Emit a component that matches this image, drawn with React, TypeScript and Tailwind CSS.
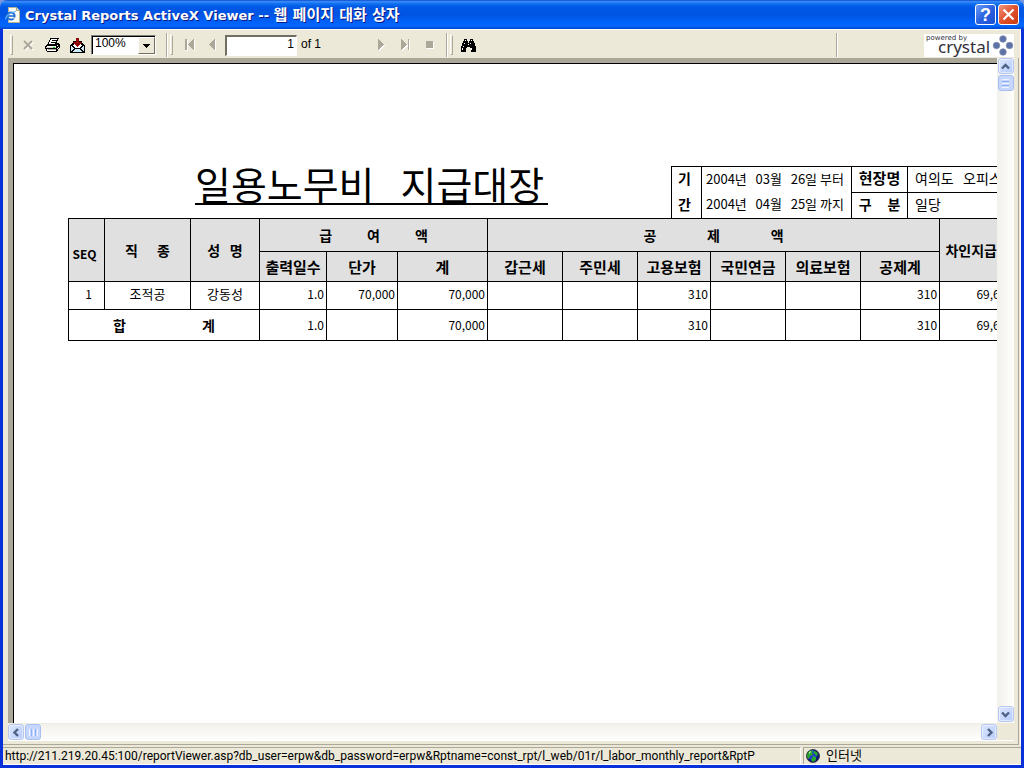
import type { ReactNode } from "react";

const ui = "font-['Liberation_Sans','Noto_Sans_CJK_KR',sans-serif]";
const report = "font-['Noto_Sans_CJK_KR',sans-serif]";

function Grip() {
  return <div className="h-5 w-[3px] border-y border-l border-r border-l-white border-t-white border-r-[#aca899] border-b-[#aca899]" />;
}

function Divider() {
  return <div className="h-6 w-[2px] border-l border-r border-l-[#aca899] border-r-white" />;
}

function ToolButton({ label, className, children }: { label: string; className: string; children: ReactNode }) {
  return (
    <button type="button" aria-label={label} className={"flex h-5 items-center justify-center " + className}>
      {children}
    </button>
  );
}

function DisabledIcon({ width, height, d }: { width: number; height: number; d: string }) {
  return (
    <svg width={width + 1} height={height + 1} shapeRendering="crispEdges">
      <path d={d} transform="translate(1 1)" fill="#fff" />
      <path d={d} fill="#aca899" />
    </svg>
  );
}

function PageIcon() {
  return (
    <svg width="16" height="16" viewBox="0 0 16 16">
      <path d="M3.5.5h8l3 3v12h-11z" fill="#fffef4" stroke="#b9b396" />
      <path d="M11.5.5v3h3" fill="#ded8bc" stroke="#a9a385" />
      <ellipse cx="6" cy="9" rx="3.6" ry="3.6" fill="none" stroke="#1f6fd6" strokeWidth="2" />
      <path d="M3 9h7" stroke="#1f6fd6" strokeWidth="1.6" />
      <path d="M7.5 10.4h3.5v1H8z" fill="#fffef4" />
      <path d="M.8 12.5C0 10 5 5 11 4.500" fill="none" stroke="#5aa9f5" strokeWidth="1.2" />
    </svg>
  );
}

function PrinterIcon() {
  return (
    <svg width="16" height="14" viewBox="0 0 16 14" shapeRendering="crispEdges">
      <path d="M5 0h9v1h-1v2h-1v2h2v1h1v4h-1v1h-1v2h-1v1H2v-1H1v-2H0V8h1V7h1V6h1V4h1V2h1z" fill="#000" />
      <path d="M6 1h6v1h-1v2h-1v2H4V4h1V2h1z" fill="#fff" />
      <path d="M7 2h4v1H7zM6 4h4v1H6z" fill="#000" />
      <path d="M2 8h9v1H2zM2 11h9v2H2z" fill="#fff" />
      <path d="M1 9h10v1H1z" fill="#d4d0c8" />
      <path d="M3 11h8v1H3z" fill="#aca899" />
      <path d="M8 9h2v1H8z" fill="#18c818" />
      <path d="M12 7h1v1h-1zM13 9h1v1h-1zM12 10h1v1h-1z" fill="#fff" />
    </svg>
  );
}

function ExportIcon() {
  return (
    <svg width="15" height="15" viewBox="0 0 15 15" shapeRendering="crispEdges">
      <path d="M3 3h9v2h1v1h1v1h1v8H0V7h1V6h1V5h1z" fill="#000" />
      <path d="M4 4h7v3h1v1h-1v1h-1v1H5V9H4V8H3V7h1z" fill="#fff" />
      <path d="M1 8h1v1h1v1h1v1H3v1H2v1H1zM14 8h-1v1h-1v1h-1v1h1v1h1v1h1zM5 11h5v1h1v1h1v1H3v-1h1v-1h1z" fill="#c8ecf8" />
      <path d="M6 0h3v4h3v1h-1v1h-1v1H9v1H8v1H7V8H6V7H5V6H4V5H3V4h3z" fill="#900808" />
    </svg>
  );
}

function BinocularsIcon() {
  return (
    <svg width="15" height="13" viewBox="0 0 15 13" shapeRendering="crispEdges">
      <path d="M3 0h3v2h1v2h1V2h1V0h3v2h1v2h1v3h1v6h-5V9H9V8H6v1H5v4H0V7h1V4h1V2h1z" fill="#000" />
      <path d="M4 1h1v1H4zM10 1h1v1h-1zM3 4h1v1H3zM9 4h1v1H9zM2 7h1v1H2zM1 9h1v2H1zM10 9h1v2h-1zM7 5h1v1H7z" fill="#fff" />
    </svg>
  );
}

function GlobeIcon() {
  return (
    <svg width="14" height="14" viewBox="0 0 14 14">
      <circle cx="7" cy="7" r="6.500" fill="#101878" />
      <circle cx="6" cy="6" r="5" fill="#2038d8" />
      <path d="M2 3l3-2 2 1-1 2 1 2-3 1-1 3-2-2V5zM8 2l3 1 1 3-2 1-1-2-2-1zM7 7l3 1v3l-3 2-2-2z" fill="#28a828" />
      <path d="M3 3l2-1v1L3 5z" fill="#b8f0b8" />
      <circle cx="7" cy="7" r="6.500" fill="none" stroke="#303030" strokeWidth=".8" />
    </svg>
  );
}

function ScrollButton({ label, d }: { label: string; d: string }) {
  return (
    <button
      type="button"
      aria-label={label}
      className="flex size-4 shrink-0 items-center justify-center rounded-[3px] border border-[#b4c8f0] bg-linear-to-br from-[#dce6fe] to-[#b6cbfa] shadow-[inset_0_0_0_1px_#ffffff80]"
    >
      <svg width="9" height="9" viewBox="0 0 9 9">
        <path d={d} fill="none" stroke="#4d6185" strokeWidth="2.4" />
      </svg>
    </button>
  );
}

function CrystalLogo() {
  return (
    <div className="flex h-[23px] w-[90px] overflow-hidden bg-white text-[#303038]">
      <div className="flex flex-1 flex-col pl-[2px]">
        <span className="font-['DejaVu_Sans'] text-[7px] leading-[8px] whitespace-nowrap">powered by</span>
        <span className="pl-3 font-['Noto_Sans'] text-[17px] leading-[9px]">crystal</span>
      </div>
      <svg width="22" height="23" viewBox="0 0 22 23">
        <g fill="#5d71a6" stroke="#8190b4" strokeWidth=".8">
          <circle cx="11" cy="5" r="3.300" />
          <circle cx="4.500" cy="11.500" r="3.300" />
          <circle cx="17.500" cy="11.500" r="3.300" />
          <circle cx="11" cy="18" r="3.300" />
        </g>
      </svg>
    </div>
  );
}

function TitleBar() {
  return (
    <header className="flex h-[29px] shrink-0 items-center rounded-t-[7px] bg-[linear-gradient(180deg,#0c49c8_0%,#3c90ff_6%,#1272f0_12%,#0058e6_24%,#0054e3_50%,#0062fa_78%,#0066ff_90%,#0046c8_100%)] px-[5px]">
      <PageIcon />
      <h1 className="ml-1 flex-1 pt-[2px] font-['DejaVu_Sans','Noto_Sans_CJK_KR',sans-serif] text-[13px] leading-5 font-bold whitespace-pre text-white [text-shadow:1px_1px_#0a1883]">
        Crystal Reports ActiveX Viewer -- <span className="text-[15px]">웹 페이지 대화 상자</span>
      </h1>
      <div className="flex gap-[2px]">
        <button
          type="button"
          aria-label="Help"
          className="flex size-[21px] items-center justify-center rounded-[3px] border border-white bg-linear-to-br from-[#6c9bf8] via-[#2b62e0] to-[#1c50d0] font-['Liberation_Sans'] text-[18px] leading-none font-bold text-white"
        >
          ?
        </button>
        <button
          type="button"
          aria-label="Close"
          className="flex size-[21px] items-center justify-center rounded-[3px] border border-white bg-linear-to-br from-[#f0957a] via-[#e0502c] to-[#c83a10]"
        >
          <svg width="13" height="13" viewBox="0 0 13 13">
            <path d="M1.500 1.500l10 10M11.500 1.500l-10 10" stroke="#fff" strokeWidth="2.200" />
          </svg>
        </button>
      </div>
    </header>
  );
}

function Toolbar() {
  return (
    <div className={`flex h-[29px] shrink-0 items-center border-t border-white bg-[#ece9d8] pt-[2px] pr-[4px] pl-[7px] text-[12px] text-black ${ui}`}>
      <Grip />
      <ToolButton label="Stop loading" className="ml-[10px] w-[11px]">
        <svg width="11" height="11" viewBox="0 0 11 11">
          <path d="M2 2l8 8M10 2l-8 8" stroke="#fff" strokeWidth="2" />
          <path d="M1 1l8 8M9 1l-8 8" stroke="#aca899" strokeWidth="2" />
        </svg>
      </ToolButton>
      <ToolButton label="Print" className="ml-[11px] w-4"><PrinterIcon /></ToolButton>
      <ToolButton label="Export" className="ml-[9px] w-[15px]"><ExportIcon /></ToolButton>
      <div className="relative ml-[6px] h-5 w-[65px] border border-t-[#808078] border-r-white border-b-white border-l-[#808078] bg-white">
        <select aria-label="Zoom" defaultValue="100%" className="block h-full w-full appearance-none border-t border-l border-black bg-white pb-1 pl-[2px] text-[12px] leading-[13px] outline-none">
          <option>100%</option>
          <option>150%</option>
        </select>
        <div className="pointer-events-none absolute top-px right-0 flex h-[17px] w-[17px] items-center justify-center border border-t-white border-r-[#716f64] border-b-[#716f64] border-l-white bg-[#ece9d8]">
          <svg width="7" height="4" shapeRendering="crispEdges"><path d="M0 0h7v1H6v1H5v1H4v1H3V3H2V2H1V1H0z" /></svg>
        </div>
      </div>
      <div className="ml-[10px] flex items-center gap-[2px]"><Divider /><Grip /></div>
      <ToolButton label="First page" className="ml-[12px] w-[10px]">
        <DisabledIcon width={9} height={11} d="M0 0h2v11H0zM9 0v11H8v-1H7V9H6V8H5V7H4V6H3V5h1V4h1V3h1V2h1V1h1V0z" />
      </ToolButton>
      <ToolButton label="Previous page" className="ml-[14px] w-[7px]">
        <DisabledIcon width={6} height={11} d="M6 0v11H5v-1H4V9H3V8H2V7H1V6H0V5h1V4h1V3h1V2h1V1h1V0z" />
      </ToolButton>
      <input
        aria-label="Page number"
        defaultValue="1"
        className="ml-[9px] h-[21px] w-[72px] border-t-2 border-r border-b border-l-2 border-t-[#716f64] border-r-white border-b-white border-l-[#716f64] bg-white pr-[2px] pb-[3px] text-right outline-none"
      />
      <span className="ml-[4px] w-[77px] pb-[2px]">of 1</span>
      <ToolButton label="Next page" className="w-[7px]">
        <DisabledIcon width={6} height={11} d="M0 0h1v1h1v1h1v1h1v1h1v1h1v1H5v1H4v1H3v1H2v1H1v1H0z" />
      </ToolButton>
      <ToolButton label="Last page" className="ml-[16px] w-[10px]">
        <DisabledIcon width={9} height={11} d="M0 0h1v1h1v1h1v1h1v1h1v1h1v1H5v1H4v1H3v1H2v1H1v1H0zM7 0h1v11H7z" />
      </ToolButton>
      <ToolButton label="Stop" className="ml-[15px] w-[8px]">
        <DisabledIcon width={7} height={7} d="M0 0h7v7H0z" />
      </ToolButton>
      <div className="ml-[12px] flex items-center gap-[2px]"><Divider /><Grip /></div>
      <ToolButton label="Search" className="ml-[7px] w-[16px]"><BinocularsIcon /></ToolButton>
      <div className="ml-auto flex items-center gap-[86px]"><Divider /><CrystalLogo /></div>
    </div>
  );
}

const head = "border-r border-b border-black bg-[#e0e0e0] p-0 text-center font-bold";
const cell = "border-r border-b border-black p-0";

function InfoTable() {
  return (
    <table className="w-[345px] table-fixed border-separate border-spacing-0 border-t border-l border-black text-[13px] leading-4 whitespace-pre">
      <colgroup>
        <col className="w-[30px]" />
        <col className="w-[150px]" />
        <col className="w-[56px]" />
        <col className="w-[108px]" />
      </colgroup>
      <tbody>
        <tr className="h-[26px]">
          <th className="border-r border-black p-0 pr-1 pb-1 text-[14px]">기</th>
          <td className="border-r border-black p-0 pb-[3px] pl-1">{"2004년   03월   26일 부터"}</td>
          <th className="border-r border-b border-black p-0 pb-[3px] text-[15px]">현장명</th>
          <td className="border-r border-b border-black p-0 pb-[3px] pl-[7px] text-[14px]">{"여의도   오피스텔"}</td>
        </tr>
        <tr className="h-[25px]">
          <th className="border-r border-black p-0 pr-1 pb-1 text-[14px]">간</th>
          <td className="border-r border-black p-0 pb-[3px] pl-1">{"2004년   04월   25일 까지"}</td>
          <th className="border-r border-black p-0 pb-1 text-[14px]">{"구     분"}</th>
          <td className="border-r border-black p-0 pb-1 pl-[7px] text-[14px]">일당</td>
        </tr>
      </tbody>
    </table>
  );
}

function PayTable() {
  return (
    <table className="w-[948px] table-fixed border-separate border-spacing-0 border-t border-l border-black text-[15px] leading-5 whitespace-pre">
      <colgroup>
        <col className="w-[36px]" />
        <col className="w-[86px]" />
        <col className="w-[69px]" />
        <col className="w-[67px]" />
        <col className="w-[71px]" />
        <col className="w-[90px]" />
        <col className="w-[75px]" />
        <col className="w-[75px]" />
        <col className="w-[73px]" />
        <col className="w-[75px]" />
        <col className="w-[75px]" />
        <col className="w-[79px]" />
        <col className="w-[76px]" />
      </colgroup>
      <thead>
        <tr className="h-[33px]">
          <th rowSpan={2} className={head + " pt-[7px] pr-1 text-[12px]"}>SEQ</th>
          <th rowSpan={2} className={head + " text-[14px]"}>{"직      종"}</th>
          <th rowSpan={2} className={head + " text-[14px]"}>{"성   명"}</th>
          <th colSpan={3} className={head + " text-[14px]"}>{"급           여           액"}</th>
          <th colSpan={6} className={head + " text-[14px]"}>{"공                제                액"}</th>
          <th rowSpan={2} className={head + " text-[14px]"}>차인지급액</th>
        </tr>
        <tr className="h-[30px]">
          {["출력일수", "단가", "계", "갑근세", "주민세", "고용보험", "국민연금", "의료보험", "공제계"].map((name) => (
            <th key={name} className={head}>{name}</th>
          ))}
        </tr>
      </thead>
      <tbody className="text-right text-[12px]">
        <tr className="h-[28px]">
          <td className={cell + " pb-[3px] pl-1 text-center"}>1</td>
          <td className={cell + " pb-[3px] text-center text-[13px]"}>조적공</td>
          <td className={cell + " pb-[3px] text-center text-[13px]"}>강동성</td>
          {["1.0", "70,000", "70,000", "", "", "310", "", "", "310", "69,690"].map((value, i) => (
            <td key={i} className={cell + " pr-[2px] pb-[3px]"}>{value}</td>
          ))}
        </tr>
        <tr className="h-[31px]">
          <th colSpan={3} className={cell + " text-center text-[14px]"}>{"합                        계"}</th>
          {["1.0", "", "70,000", "", "", "310", "", "", "310", "69,690"].map((value, i) => (
            <td key={i} className={cell + " pr-[2px]"}>{value}</td>
          ))}
        </tr>
      </tbody>
    </table>
  );
}

function Viewer() {
  return (
    <main className="mr-px flex min-h-0 flex-1 flex-col border-r border-b border-[#aca899] bg-[#ece9d8] pr-[4px] pb-[3px] pl-[5px]">
      <div className="flex min-h-0 flex-1">
        <div className="flex min-w-0 flex-1 bg-[#aca899] pt-[5px] pl-[5px]">
          <section className={`min-w-0 flex-1 overflow-hidden border-t border-l border-black bg-white pt-[102px] pl-[54px] text-black ${report}`}>
            <div className="w-[948px]">
              <div className="flex items-end justify-between">
                <h2 className="mb-[13px] ml-[127px] border-b-2 border-black pr-1 pb-[3px] text-[39px] leading-[33px] whitespace-pre">
                  {"일용노무비   지급대장"}
                </h2>
                <InfoTable />
              </div>
              <PayTable />
            </div>
          </section>
        </div>
        <div className="flex w-[17px] flex-col items-center gap-px bg-linear-to-r from-[#f3f1ec] to-[#fefefb] pb-px">
          <ScrollButton label="Scroll up" d="M1 6.500l3.500-3.500L8 6.500" />
          <div className="flex h-4 w-4 flex-col items-center justify-center gap-px rounded-[3px] border border-[#a9bff0] bg-[#c6d6fd]">
            <i className="h-px w-[7px] bg-[#f0f4ff]" />
            <i className="h-px w-[7px] bg-[#8cb0f8]" />
            <i className="h-px w-[7px] bg-[#f0f4ff]" />
            <i className="h-px w-[7px] bg-[#8cb0f8]" />
            <i className="h-px w-[7px] bg-[#f0f4ff]" />
          </div>
          <div className="flex-1" />
          <ScrollButton label="Scroll down" d="M1 2.500L4.500 6 8 2.500" />
        </div>
      </div>
      <div className="flex border-b border-white">
        <div className="flex h-[17px] flex-1 items-center gap-px border-t border-[#eeede5] bg-linear-to-b from-[#f3f1ec] to-[#fefefb]">
          <ScrollButton label="Scroll left" d="M6 1L2.500 4.500 6 8" />
          <div className="flex h-4 w-4 items-center justify-center gap-px rounded-[3px] border border-[#a9bff0] bg-[#c6d6fd]">
            <i className="h-[7px] w-px bg-[#f0f4ff]" />
            <i className="h-[7px] w-px bg-[#8cb0f8]" />
            <i className="h-[7px] w-px bg-[#f0f4ff]" />
            <i className="h-[7px] w-px bg-[#8cb0f8]" />
            <i className="h-[7px] w-px bg-[#f0f4ff]" />
          </div>
          <div className="flex-1" />
          <ScrollButton label="Scroll right" d="M3 1l3.500 3.500L3 8" />
        </div>
        <div className="w-[17px]" />
      </div>
    </main>
  );
}

function StatusBar() {
  return (
    <footer className="flex h-5 shrink-0 gap-[2px] border-b border-white bg-[#ece9d8] pt-[2px] font-['Roboto','Noto_Sans_CJK_KR',sans-serif] text-[12px] leading-4 text-black">
      <div className="w-[798px] overflow-hidden border-t border-r border-t-[#aca899] border-r-white pl-[2px] whitespace-nowrap">
        http://211.219.20.45:100/reportViewer.asp?db_user=erpw&amp;db_password=erpw&amp;Rptname=const_rpt/l_web/01r/l_labor_monthly_report&amp;RptP
      </div>
      <div className="flex flex-1 items-center gap-[6px] border-t border-l border-[#aca899] pl-[2px] text-[13px]">
        <GlobeIcon />
        <span>인터넷</span>
      </div>
    </footer>
  );
}

export default function App() {
  return (
    <div className="flex h-screen flex-col bg-[#7a96df]">
      <TitleBar />
      <div className="flex min-h-0 flex-1 flex-col border-x-[3px] border-b-[3px] border-[#0831d9] bg-[#ece9d8]">
        <div className="flex min-h-0 flex-1 flex-col border-r border-white">
          <div className="mr-[2px] flex flex-col">
            <Toolbar />
          </div>
          <Viewer />
        </div>
        <StatusBar />
      </div>
    </div>
  );
}
